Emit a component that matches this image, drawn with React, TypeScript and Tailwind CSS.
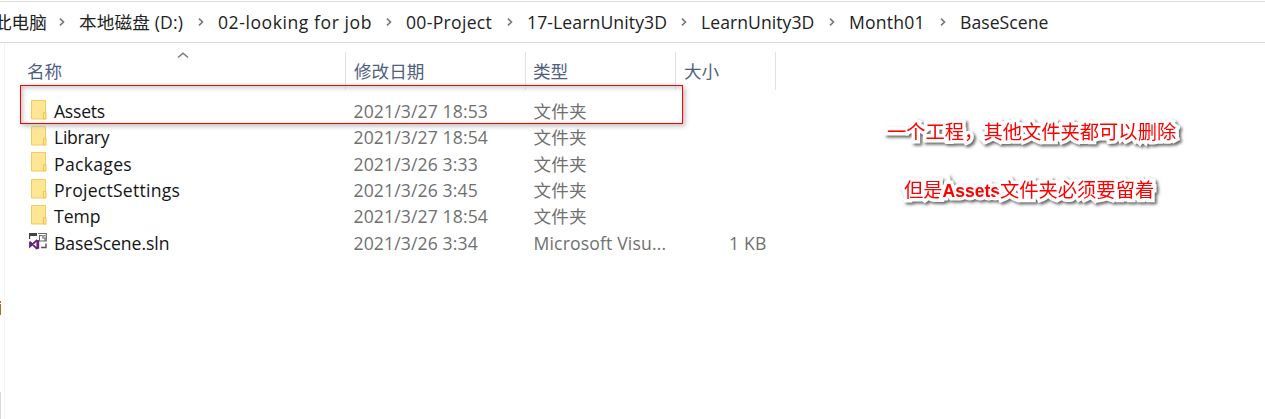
const crumbs = [
  { label: "此电脑", box: "w-[51px]", text: "-ml-[6px]" },
  { label: "本地磁盘 (D:)", box: "w-[105px]", text: "tracking-[0.15px]" },
  { label: "02-looking for job", box: "w-[154px]", text: "tracking-[0.55px]" },
  { label: "00-Project", box: "w-[87px]", text: "tracking-[0.3px]" },
  { label: "17-LearnUnity3D", box: "w-[140px]", text: "tracking-[0.1px]" },
  { label: "LearnUnity3D", box: "w-[114px]", text: "tracking-[0.05px]" },
  { label: "Month01", box: "w-[77px]", text: "tracking-[0.2px]" },
  { label: "BaseScene", box: "w-[90px]", text: "tracking-[0.05px]" },
];

const rows = [
  { name: "Assets", track: "tracking-[-0.25px]", date: "2021/3/27 18:53", type: "文件夹", size: "" },
  { name: "Library", track: "tracking-[-0.3px]", date: "2021/3/27 18:54", type: "文件夹", size: "" },
  { name: "Packages", track: "tracking-[0.3px]", date: "2021/3/26 3:33", type: "文件夹", size: "" },
  { name: "ProjectSettings", track: "tracking-[0.23px]", date: "2021/3/26 3:45", type: "文件夹", size: "" },
  { name: "Temp", track: "tracking-[0px]", date: "2021/3/27 18:54", type: "文件夹", size: "" },
  { name: "BaseScene.sln", track: "tracking-[-0.07px]", date: "2021/3/26 3:34", type: "Microsoft Visu...", size: "1 KB" },
];

function Chevron() {
  return (
    <svg width="34" height="10" viewBox="0 0 34 10" className="shrink-0" fill="none" stroke="#777" strokeWidth="1.6">
      <path d="M15 1.7 L18.5 5 L15 8.3" />
    </svg>
  );
}

function FolderIcon() {
  return (
    <svg width="18" height="22" viewBox="0 0 18 22" fill="none">
      <path d="M1.5 1.5 H15.5 V20 H1.5 Z" fill="#ffe694" stroke="#f0cc5c" />
      <path d="M13.5 20 V13.5 H16 V20 Z" fill="#ffe48a" stroke="#edc64f" />
    </svg>
  );
}

function SolutionIcon() {
  return (
    <svg width="20" height="20" viewBox="0 0 20 20" fill="none">
      <path d="M1 2 H9 V5 H2.2 V8 H1 Z" fill="#444" />
      <path d="M10 2.5 H18.3 V10 H11 M14 4.5 H11.5 V9.5 M17.5 4.8 H14.8 V7 H17 V9.5" stroke="#666" strokeWidth="1.1" />
      <path d="M18 12.5 V16.5 H13" stroke="#555" strokeWidth="1.4" />
      <path d="M2 10.5 V15.5 L8.6 9.5 L10.3 10.2 V16.8 L8.6 17.5 L2 10.8" stroke="#68217a" strokeWidth="1.8" />
      <path d="M9.5 9.5 V17.3" stroke="#68217a" strokeWidth="2.2" />
    </svg>
  );
}

export default function App() {
  return (
    <div className="relative flex h-[419px] w-[1265px] flex-col overflow-hidden bg-white font-['Open_Sans','Noto_Sans_CJK_SC',sans-serif] text-[17.6px] leading-[26px] whitespace-nowrap">
      <nav className="mt-px flex h-[42px] shrink-0 items-center border-t border-b border-t-[#dcdcdc] border-b-[#d9d9d9] pb-px text-[#222]">
        {crumbs.map((c, i) => (
          <div key={i} className="flex items-center">
            {i > 0 && <Chevron />}
            <span className={`${c.box} ${c.text}`}>{c.label}</span>
          </div>
        ))}
      </nav>

      <div className="flex flex-1">
        <aside className="flex w-[5px] shrink-0 flex-col border-r border-[#f3f3f3]">
          <div className="mt-[258px] h-[2px] w-px bg-[#bd6b19]" />
          <div className="mt-px h-[11px] w-px bg-[#bd6b19]" />
          <div className="mt-[77px] h-[27px] w-px bg-[#d9d9d9]" />
        </aside>
        <main className="flex w-[771px] flex-col">
          <header className="mt-[9px] flex h-[38px] shrink-0 text-[#4f6080]">
            <div className="relative w-[341px] border-r border-[#e1e1e1] pt-[6px] pl-[22px]">
              名称
              <svg width="12" height="7" viewBox="0 0 12 7" className="absolute top-0 left-[172px]" fill="none" stroke="#777" strokeWidth="1.4">
                <path d="M1 5.5 L6 1.2 L11 5.5" />
              </svg>
            </div>
            <div className="w-[180px] border-r border-[#e1e1e1] pt-[6px] pl-[8px]">修改日期</div>
            <div className="w-[150px] border-r border-[#e1e1e1] pt-[6px] pl-[7px]">类型</div>
            <div className="w-[100px] border-r border-[#e1e1e1] pt-[6px] pl-[8px]">大小</div>
          </header>
          <div className="mt-[8px] flex flex-col text-[#707070]">
            {rows.map((r) => (
              <div key={r.name} className="flex h-[26.3px] items-center">
                <div className="flex w-[348.5px] items-center pl-[25px] text-[#151515]">
                  <div className="flex w-[24px] shrink-0 items-center pb-[3px]">
                    {r.size ? <div className="-ml-[2px]"><SolutionIcon /></div> : <FolderIcon />}
                  </div>
                  <span className={r.track}>{r.name}</span>
                </div>
                <span className="w-[180px] tracking-[0.12px]">{r.date}</span>
                <span className="w-[150px] tracking-[0.15px]">{r.type}</span>
                <span className="w-[83px] text-right tracking-[0.2px]">{r.size}</span>
              </div>
            ))}
          </div>
        </main>
        <section className="flex flex-1 flex-col pt-[77px] font-['Liberation_Sans','Noto_Sans_CJK_SC',sans-serif] text-[19.3px] text-[#f00] [filter:drop-shadow(2px_2px_1.5px_#666)]">
          <p className="pl-[111px] [-webkit-text-stroke:7px_white] [paint-order:stroke_fill]">一个工程，其他文件夹都可以删除</p>
          <p className="mt-[32px] pl-[128px] [-webkit-text-stroke:7px_white] [paint-order:stroke_fill]">
            但是<b className="text-[17.5px]">Assets</b>文件夹必须要留着
          </p>
        </section>
      </div>
      <div className="absolute top-[85px] left-[20px] h-[39px] w-[663px] border border-[#f00] shadow-[2px_2px_5px_#bbb,inset_2px_2px_5px_#ccc]" />
    </div>
  );
}
